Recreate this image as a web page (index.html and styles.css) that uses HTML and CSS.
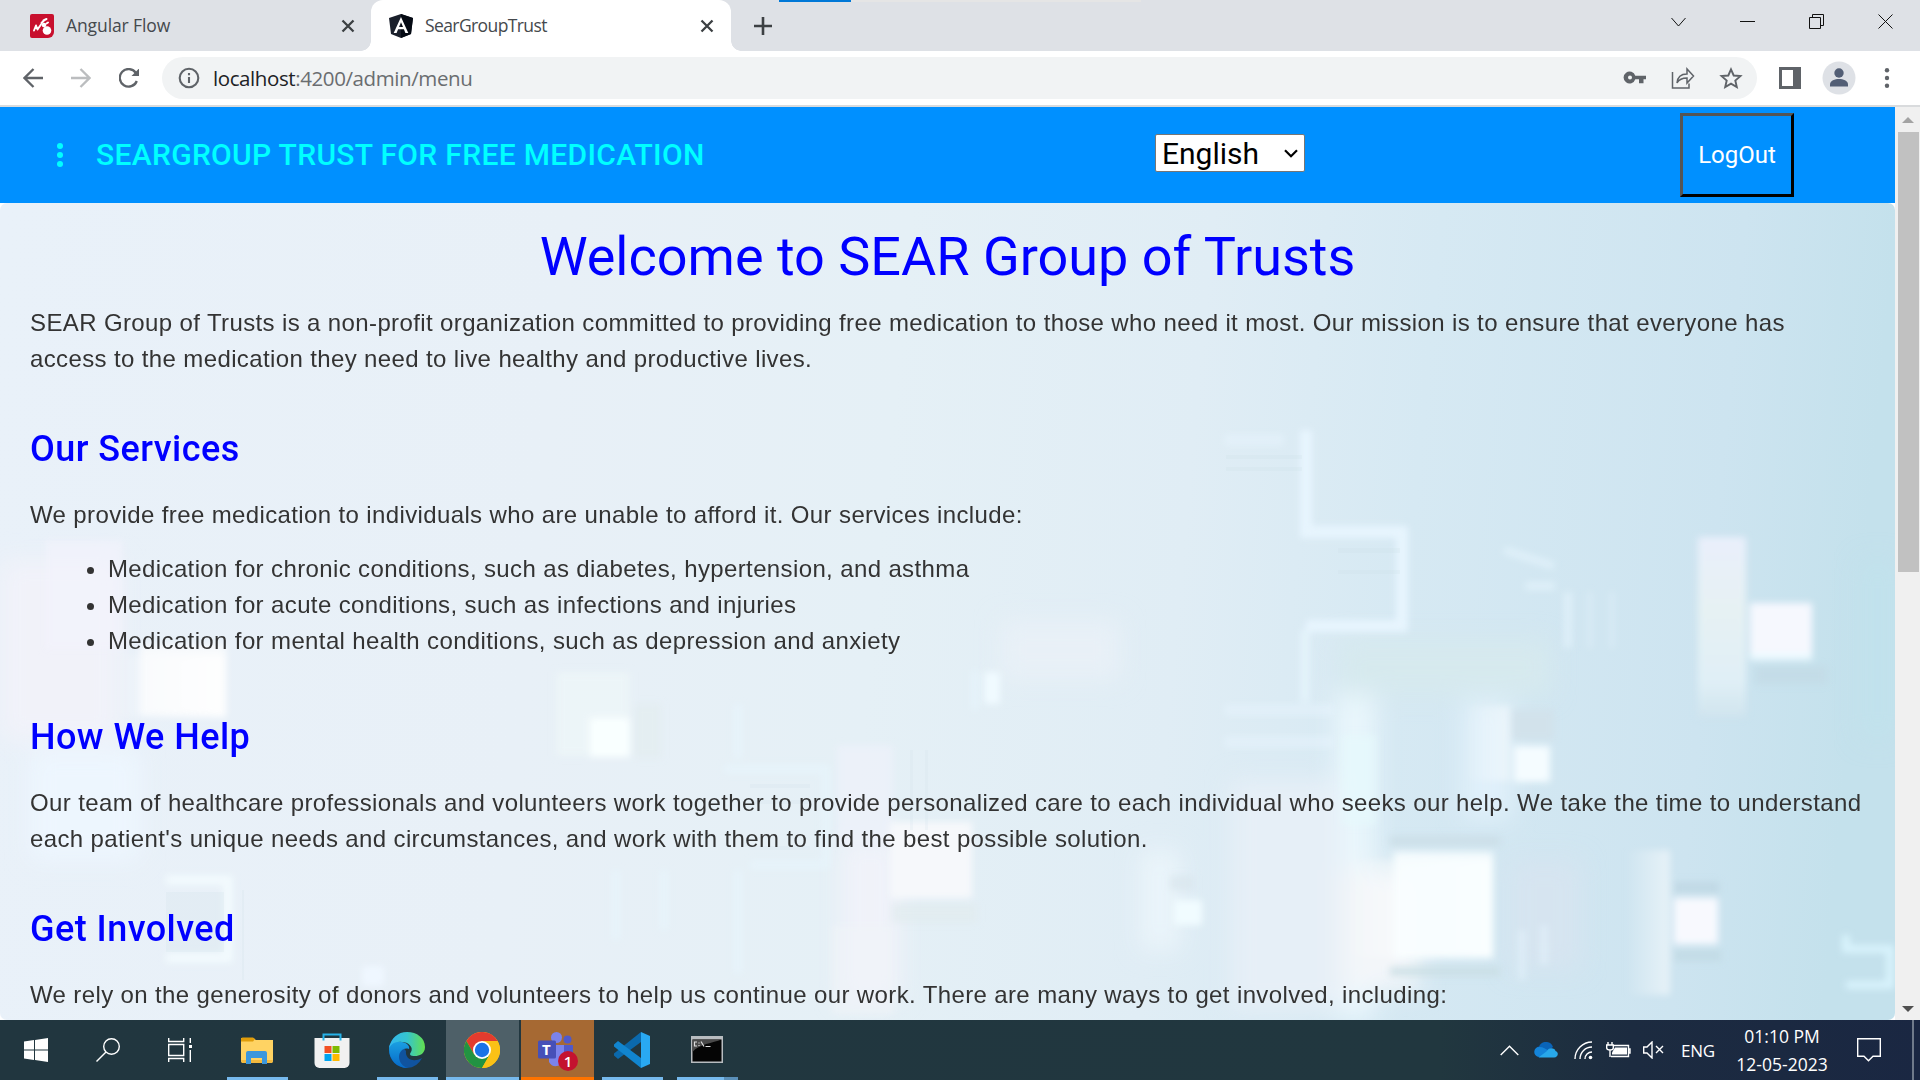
FILE: index.html
```html
<!DOCTYPE html>
<html lang="en">
<head>
<meta charset="utf-8">
<title>SearGroupTrust</title>
<link rel="stylesheet" href="styles.css">
</head>
<body>
<div class="tabstrip">
  <div class="progress"></div>
  <div class="tab">
    <svg class="favicon" viewBox="0 0 24 24"><path d="M2 0h20a2 2 0 0 1 2 2v16a6 6 0 0 1-6 6H2a2 2 0 0 1-2-2V2a2 2 0 0 1 2-2z" fill="#c8102e"/><path d="M4 16.500l2-5 1.500 4 3.500-5" fill="none" stroke="#fff" stroke-width="1.900" stroke-linecap="round" stroke-linejoin="round"/><circle cx="17" cy="16.500" r="4.300" fill="#fff"/><circle cx="14" cy="11" r="2.300" fill="#fff"/><path d="M13.500 6.500l3-1.500M11.500 9l2.500-2.500M16.500 9.500l1.500-1" stroke="#fff" stroke-width="2" stroke-linecap="round"/></svg>
    <span class="tab-title">Angular Flow</span>
    <svg class="tab-close" viewBox="0 0 14 14"><path d="M1.500 1.500l11 11M12.500 1.500l-11 11"/></svg>
  </div>
  <div class="tab active">
    <svg class="favicon" viewBox="0 0 24 24"><path d="M12 0l12 4-2 16-10 4L2 20 0 4z" fill="#1a1f2b"/><path d="M12 0l12 4-2 16-10 4z" fill="#050a14"/><path d="M12 3L4.700 19h2.900l1.500-3.800h5.800l1.500 3.800h2.900zm0 5.200l2 4.700h-4z" fill="#fff"/></svg>
    <span class="tab-title">SearGroupTrust</span>
    <svg class="tab-close" viewBox="0 0 14 14"><path d="M1.500 1.500l11 11M12.500 1.500l-11 11"/></svg>
  </div>
  <svg class="new-tab" viewBox="0 0 18 18"><path d="M9 0v18M0 9h18"/></svg>
  <div class="window-controls">
    <svg viewBox="0 0 16 16"><path d="M.5 4l7 8 7-8"/></svg>
    <svg viewBox="0 0 16 16"><path d="M0 7.500h15"/></svg>
    <svg viewBox="0 0 16 16"><path d="M.5 3.500h11v11H.5zM3.500 3.500v-3h11v11h-3"/></svg>
    <svg viewBox="0 0 16 16"><path d="M.5.5l14 14M14.500.5l-14 14"/></svg>
  </div>
</div>
<div class="toolbar">
  <div class="nav">
    <svg viewBox="0 0 20 20"><path d="M20 10H1.500M10.500 1l-9 9 9 9"/></svg>
    <svg class="disabled" viewBox="0 0 20 20"><path d="M0 10h18.500M9.500 1l9 9-9 9"/></svg>
    <svg viewBox="0 0 20 20"><path d="M17.800 13a8.800 8.800 0 1 1-1-8.200"/><path class="solid" d="M20.500 0v8h-8z"/></svg>
  </div>
  <div class="omnibox">
    <svg class="info" viewBox="0 0 22 22"><circle cx="11" cy="11" r="9.300"/><path d="M11 10v6M11 6v2.200"/></svg>
    <span class="url"><span class="host">localhost</span>:4200/admin/menu</span>
    <div class="omni-actions">
      <svg viewBox="0 0 24 24"><path class="solid" d="M12.300 9.700A6 6 0 1 0 12.300 13.300H16v4h4.500v-4h2.500V9.700zM7 13.500a2 2 0 1 1 0-4 2 2 0 0 1 0 4z"/></svg>
      <svg viewBox="0 0 24 24"><path stroke-width="1.500" d="M1.500 6v16H18v-4.500M6 17c.5-6 4-9 10-9V3l6.500 7-6.500 7v-5c-5 0-8 1.500-10 5z"/></svg>
      <svg viewBox="0 0 24 24"><path stroke-width="1.900" d="M12 3.300l2.700 6.200 6.700.6-5.100 4.400 1.500 6.600-5.800-3.500-5.800 3.500 1.500-6.600-5.100-4.400 6.700-.6z"/></svg>
    </div>
  </div>
  <svg class="side-panel" viewBox="0 0 22 22"><path d="M0 0h22v22H0zM3 3v16h11V3z" fill="#5f6368" fill-rule="evenodd"/></svg>
  <svg class="avatar" viewBox="0 0 34 34"><circle cx="17" cy="17" r="16.500" fill="#dee1e6"/><circle cx="17" cy="12" r="4.700" fill="#525e75"/><path d="M8 25.500v-2.200c0-3.500 5-5.300 9-5.300s9 1.800 9 5.300v2.200z" fill="#525e75"/></svg>
  <svg class="kebab" viewBox="0 0 6 22"><circle cx="3" cy="3.200" r="2.200"/><circle cx="3" cy="11" r="2.200"/><circle cx="3" cy="18.800" r="2.200"/></svg>
</div>
<div class="viewport">
  <div class="page">
    <header class="app-header">
      <svg class="menu-dots" viewBox="0 0 6 24"><circle cx="3" cy="3" r="3"/><circle cx="3" cy="12" r="3"/><circle cx="3" cy="21" r="3"/></svg>
      <span class="brand">SEARGROUP TRUST FOR FREE MEDICATION</span>
      <div class="language"><span>English</span><svg viewBox="0 0 14 9"><path d="M1 1.200l6 6 6-6"/></svg></div>
      <button class="logout">LogOut</button>
    </header>
    <main class="content">
      <svg class="backdrop" viewBox="0 203 1895 817" preserveAspectRatio="none">
        <defs>
          <linearGradient id="base" x1="0" y1="0" x2="1" y2=".04"><stop offset="0" stop-color="#e9f1f9"/><stop offset=".3" stop-color="#e8f0f7"/><stop offset=".48" stop-color="#e5f0f6"/><stop offset=".64" stop-color="#e0edf5"/><stop offset=".76" stop-color="#d6e9f3"/><stop offset=".92" stop-color="#cde4f0"/><stop offset="1" stop-color="#c4e1ec"/></linearGradient>
          <linearGradient id="fadeR"><stop offset="0" stop-color="#fff" stop-opacity="0"/><stop offset="1" stop-color="#fff" stop-opacity=".95"/></linearGradient>
          <linearGradient id="pillar" x1="0" y1="0" x2="0" y2="1"><stop offset="0" stop-color="#e9effb"/><stop offset=".4" stop-color="#e6f1f3"/><stop offset=".8" stop-color="#e0eff6"/><stop offset="1" stop-color="#d0e4ee"/></linearGradient>
          <filter id="s3" x="-30%" y="-30%" width="160%" height="160%"><feGaussianBlur stdDeviation="3.500"/></filter>
          <filter id="s8" x="-50%" y="-50%" width="200%" height="200%"><feGaussianBlur stdDeviation="12"/></filter>
        </defs>
        <rect y="203" width="1895" height="817" fill="url(#base)"/>
        <g filter="url(#s8)">
          <rect x="0" y="560" width="120" height="180" fill="#f1f2f9"/>
          <rect x="30" y="750" width="110" height="110" fill="#edf6fe"/>
          <rect x="1335" y="690" width="40" height="330" fill="#e9f6fc"/>
          <rect x="1230" y="780" width="110" height="230" fill="#e6eff7"/>
          <rect x="1340" y="870" width="80" height="120" fill="#f3f6f9"/>
          <rect x="1462" y="700" width="50" height="120" fill="#e0f0fa"/>
          <rect x="1860" y="560" width="35" height="180" fill="#c0e3ec" opacity=".6"/>
          <rect x="1140" y="850" width="40" height="100" fill="#eaf4fa"/>
          <rect x="1510" y="860" width="70" height="110" fill="#d6e4f0"/>
          <rect x="1000" y="620" width="120" height="60" fill="#e8f0f7"/>
          <rect x="1340" y="640" width="210" height="55" fill="#d6e9ee"/>
          <rect x="840" y="840" width="60" height="160" fill="#f0f2f9"/>
        </g>
        <g filter="url(#s3)">
          <rect x="45" y="540" width="78" height="110" fill="#f3f2fc" opacity=".65"/>
          <rect x="112" y="655" width="114" height="62" fill="url(#fadeR)"/>
          <rect x="140" y="645" width="86" height="70" fill="#fdfdfd" opacity=".7"/>
          <rect x="556" y="672" width="74" height="84" fill="#eef6f8" opacity=".7"/>
          <rect x="590" y="718" width="40" height="39" fill="#f9ffff"/>
          <rect x="634" y="704" width="27" height="54" fill="#e2ecef" opacity=".7"/>
          <rect x="984" y="672" width="16" height="32" fill="#f0faff"/>
          <rect x="837" y="745" width="56" height="100" fill="#f0f1fb" opacity=".6"/>
          <rect x="832" y="925" width="62" height="90" fill="#f0f4f9" opacity=".6"/>
          <rect x="890" y="822" width="82" height="76" fill="#f6f8fb"/>
          <rect x="892" y="904" width="85" height="18" fill="#e1ebee" opacity=".7"/>
          <rect x="1698" y="537" width="48" height="180" fill="url(#pillar)"/>
          <rect x="1750" y="630" width="62" height="30" fill="#edfaff"/>
          <rect x="1750" y="603" width="62" height="50" fill="#f6f8fe"/>
          <rect x="1755" y="666" width="72" height="18" fill="#c3dbe6" opacity=".8"/>
          <rect x="1462" y="706" width="48" height="75" fill="url(#fadeR)" opacity=".45"/>
          <rect x="1512" y="710" width="42" height="30" fill="#d2e2eb"/>
          <rect x="1514" y="746" width="36" height="36" fill="#f5fcff"/>
          <rect x="1390" y="836" width="110" height="10" fill="#cbdde6" opacity=".8"/>
          <rect x="1340" y="860" width="153" height="98" fill="url(#fadeR)"/>
          <rect x="1394" y="852" width="99" height="106" fill="#f9feff" opacity=".85"/>
          <rect x="1390" y="967" width="110" height="9" fill="#c9dde3" opacity=".8"/>
          <rect x="1626" y="850" width="44" height="145" fill="url(#fadeR)" opacity=".55"/>
          <rect x="1674" y="882" width="45" height="11" fill="#bed6e2" opacity=".8"/>
          <rect x="1674" y="898" width="44" height="46" fill="#f8f9fe"/>
          <rect x="1674" y="950" width="47" height="11" fill="#c0d9e3" opacity=".8"/>
          <rect x="1174" y="900" width="28" height="25" fill="#f1fcff"/>
          <rect x="1170" y="876" width="24" height="14" fill="#d8e6ec" opacity=".7"/>
          <rect x="1342" y="735" width="34" height="90" fill="#e6f9fc" opacity=".7"/>
          <rect x="362" y="966" width="22" height="20" fill="#eff7ff"/>
        </g>
        <g fill="none" stroke="#e8f6fe" stroke-width="8" filter="url(#s3)">
          <path d="M1306 430v102h96v94h-96" stroke-width="12" opacity=".95"/>
          <path d="M1305 630v72" stroke-width="9" opacity=".7"/>
          <path d="M1224 440h60M1224 710h110M1224 742h110" stroke-width="12" opacity=".45"/>
          <path d="M1504 550l50 16M1525 586h30M1568 592v56" opacity=".6"/>
          <path d="M1590 592v56M1612 592v56" stroke-width="5" opacity=".4"/>
          <path d="M724 769h102v96H750M738 704v54M738 870v104M616 870v70M664 870v60M975 670v40" opacity=".6"/>
          <path d="M166 880h62v78h-62" stroke="#f4fdff" stroke-width="9" opacity=".85"/>
          <path d="M1846 935v14h44v36h-44" stroke="#d8f3fc"/>
          <path d="M1544 925v40M1522 930v50" opacity=".5"/>
        </g>
        <g fill="#cadbe5" opacity=".18">
          <path d="M1226 455h76v4h-76zM1226 467h76v4h-76zM1338 548h62v5h-62zM1338 570h62v4h-62zM750 784h60v4h-60zM750 800h60v4h-60zM750 846h60v4h-60z"/>
          <path d="M166 892h58v60h-58zM242 890h2v90h-2zM910 750h3v80h-3zM925 750h3v80h-3z"/>
        </g>
      </svg>
      <h1>Welcome to SEAR Group of Trusts</h1>
      <p>SEAR Group of Trusts is a non-profit organization committed to providing free medication to those who need it most. Our mission is to ensure that everyone has access to the medication they need to live healthy and productive lives.</p>
      <h2>Our Services</h2>
      <p>We provide free medication to individuals who are unable to afford it. Our services include:</p>
      <ul>
        <li>Medication for chronic conditions, such as diabetes, hypertension, and asthma</li>
        <li>Medication for acute conditions, such as infections and injuries</li>
        <li>Medication for mental health conditions, such as depression and anxiety</li>
      </ul>
      <h2>How We Help</h2>
      <p>Our team of healthcare professionals and volunteers work together to provide personalized care to each individual who seeks our help. We take the time to understand each patient's unique needs and circumstances, and work with them to find the best possible solution.</p>
      <h2>Get Involved</h2>
      <p>We rely on the generosity of donors and volunteers to help us continue our work. There are many ways to get involved, including:</p>
    </main>
  </div>
  <div class="scrollbar">
    <svg viewBox="0 0 12 6"><path d="M0 6l6-6 6 6z" fill="#a3a3a3"/></svg>
    <div class="thumb"></div>
    <svg viewBox="0 0 12 6"><path d="M0 0l6 6 6-6z" fill="#505050"/></svg>
  </div>
</div>
<div class="taskbar">
  <div class="sys">
    <svg class="i24" viewBox="0 0 24 24"><path fill="#fff" d="M0 3.500l10-1.400v9.400H0zM11 1.900L24 0v11.500H11zM0 12.500h10v9.400L0 20.500zM11 12.500h13V24l-13-1.900z"/></svg>
    <svg class="i24 line" viewBox="0 0 24 24"><circle cx="15.500" cy="8.500" r="7.800"/><path d="M10 14L.5 23.500"/></svg>
    <svg class="i24 line" viewBox="0 0 24 24"><path d="M.7 0v3.500h15V0M.7 6.500h15v11H.7zM.7 24v-3.500h15V24M22.300 0v5M22.300 12v12"/><path d="M21 7h3v3h-3z" fill="#fff" stroke="none"/></svg>
  </div>
  <div class="apps">
    <div class="app open"><svg class="i36" viewBox="0 0 36 36"><path d="M2 6h12l3 2h17v21a2 2 0 0 1-2 2H4a2 2 0 0 1-2-2z" fill="#ffd363"/><path d="M2 7a1.500 1.500 0 0 1 1.500-1.500H14L16 7l-2 2.500H2z" fill="#e09d0a"/><path d="M7 32V21a2 2 0 0 1 2-2h17a2 2 0 0 1 2 2v11h-5v-6H12v6z" fill="#3b97dd"/><path d="M2 28h5v3H3zM12 28h11v3H12zM28 28h6l-1 3h-5z" fill="#f3b93e"/></svg></div>
    <div class="app"><svg class="i36" viewBox="0 0 36 36"><path d="M.5 6h35v25a5 5 0 0 1-5 5h-25a5 5 0 0 1-5-5z" fill="#f1f1f1"/><path d="M9.500 8.500V2.500h17v6" fill="none" stroke="#27b3ea" stroke-width="2"/><path d="M10.500 14h7v7h-7z" fill="#f25022"/><path d="M18.500 14h7v7h-7z" fill="#7fba00"/><path d="M10.500 22h7v7h-7z" fill="#00a4ef"/><path d="M18.500 22h7v7h-7z" fill="#ffb900"/></svg></div>
    <div class="app open"><svg class="i36" viewBox="0 0 36 36"><defs><linearGradient id="edgeTop"><stop offset="0" stop-color="#32b6f0"/><stop offset=".5" stop-color="#35c4cf"/><stop offset="1" stop-color="#64e04e"/></linearGradient><linearGradient id="edgeSide" x1="0" y1="0" x2="0" y2="1"><stop offset="0" stop-color="#1ba0e2"/><stop offset="1" stop-color="#0669c8"/></linearGradient></defs><path d="M33 26A18 18 0 0 1 18 36C8 36 0 28 0 18l10-8 7 9c-1 8 7 12 16 7z" fill="#10539f"/><path d="M0 17C0 8 9 9 13 10c5 1 8 4 7 7-6-2-10 3-10 8 0 5 4 10 9 11C8 36 0 28 0 17z" fill="url(#edgeSide)"/><path d="M0 16C2 6 9 0 18 0c10 0 18 6 18 15 0 7-6 9-10 9-5 0-6-1.500-4-4 3-5-3-10-9-10C7 9 3 11 0 16z" fill="url(#edgeTop)"/></svg></div>
    <div class="app open current"><svg class="i36" viewBox="0 0 36 36"><circle cx="18" cy="18" r="18" fill="#fbc116"/><path d="M2.400 9A18 18 0 0 1 33.600 9H18l-7.800 13.500z" fill="#e33b2e"/><path d="M2.400 9A18 18 0 0 0 18 36l7.800-13.500H10.200z" fill="#229342"/><path d="M18 9h15.600A18 18 0 0 1 18 36l7.800-13.500z" fill="#fbc116"/><circle cx="18" cy="18" r="9" fill="#fff"/><circle cx="18" cy="18" r="7.200" fill="#1a73e8"/></svg></div>
    <div class="app alert"><svg class="i40" viewBox="0 0 40 40"><circle cx="19.500" cy="7.500" r="5.500" fill="#7b83eb"/><circle cx="30.500" cy="9.500" r="4" fill="#5059c9"/><path d="M26 15h10v10a6 6 0 0 1-10 4z" fill="#5059c9"/><path d="M12 15h15v13a8 8 0 0 1-15 4z" fill="#7b83eb"/><rect x="1" y="10.500" width="18" height="18" rx="1.500" fill="#4650b8"/></svg><span class="teams-letter">T</span><span class="count">1</span></div>
    <div class="app open"><svg class="i36" viewBox="0 0 36 36"><path d="M27 0v10L4 27l-4-3.500v-2z" fill="#0b69ac"/><path d="M27 36V26L4 9 0 12.500v2z" fill="#1185cf"/><path d="M27 0l9 4v28l-9 4z" fill="#29a9f2"/></svg></div>
    <div class="app open grouped"><svg class="i36" viewBox="0 0 36 36"><path d="M2 4h32v27H2z" fill="#b8bcc0"/><path d="M3.500 7.500h29v22h-29z" fill="#050505"/><path d="M3.500 7.500h29C24 11 10 12 3.500 20z" fill="#4a4a4a"/><path d="M8 10H5.500v4H8M10 10.500v1M10 13v1M12 9.500l3 5M16.500 14.500h5" fill="none" stroke="#ddd" stroke-width="1.200"/></svg></div>
  </div>
  <div class="tray">
    <svg class="t-up line" viewBox="0 0 19 11"><path d="M.7 10L9.500 1.200 18.300 10"/></svg>
    <svg class="t-cloud" viewBox="0 0 24 16"><path d="M4 14a5 5 0 0 1 1-9.500A7.500 7.500 0 0 1 19 5l-8 6z" fill="#0a64b8"/><path d="M5 15A5 5 0 0 1 5.500 5C9 5 12 7 15 9l-8 6z" fill="#1484d9"/><path d="M4.500 15.500L13 9c2-4 8-3 8.500 0 3.500 1 3 6.500-1.500 6.500z" fill="#28a8ea"/></svg>
    <svg class="t-wifi line" viewBox="0 0 19 19"><path d="M1 18A17 17 0 0 1 18 1M6 18A12 12 0 0 1 18 6M11 18a7 7 0 0 1 7-7"/><circle cx="16.500" cy="16.500" r="1.800" fill="#fff" stroke="none"/></svg>
    <svg class="t-batt line" viewBox="0 0 25 18"><path d="M8 4.500h14.500v11H5M22.500 8h1.500v4h-1.500"/><path d="M9 6.500h12v7H6v-2z" fill="#fff" stroke="none"/><path d="M2 1v3M6 1v3M.7 4h6.600v3q0 2-3.300 2T.7 7zM4 9v7"/></svg>
    <svg class="t-vol line" viewBox="0 0 21 18"><path d="M.7 6H4l5-5v16l-5-5H.7zM13 5l7 7M20 5l-7 7"/></svg>
    <span class="lang">ENG</span>
    <div class="clock"><span class="time">01:10 PM</span><span class="date">12-05-2023</span></div>
    <svg class="t-note line" viewBox="0 0 24 24"><path d="M.7.7h22.600v17.600H16l-4.500 4.500L7 18.300H.7z"/></svg>
    <div class="peek"></div>
  </div>
</div>
</body>
</html>
```
FILE: styles.css
```css
* { box-sizing: border-box; }
body {
  margin: 0;
  width: 1920px;
  height: 1080px;
  overflow: hidden;
  display: flex;
  flex-direction: column;
  font-family: "Open Sans", "Noto Sans", sans-serif;
  background: #fff;
}
svg { display: block; flex: none; }

/* tab strip */
.tabstrip {
  position: relative;
  height: 51px;
  flex: none;
  display: flex;
  align-items: center;
  background: #dee1e6;
}
.progress {
  position: absolute;
  left: 779px;
  top: 0;
  width: 362px;
  height: 2px;
  background: linear-gradient(90deg, #0078d7 72px, #e5e5e5 72px);
}
.tab {
  width: 371px;
  height: 51px;
  display: flex;
  align-items: center;
  padding: 0 16px 0 30px;
}
.tab.active {
  position: relative;
  width: 360px;
  padding: 0 17px 0 18px;
  background: #fff;
  border-radius: 12px 12px 0 0;
}
.tab.active::before,
.tab.active::after {
  content: "";
  position: absolute;
  bottom: 0;
  width: 10px;
  height: 10px;
}
.tab.active::before { left: -10px; background: radial-gradient(circle at 0 0, transparent 9.5px, #fff 10px); }
.tab.active::after { right: -10px; background: radial-gradient(circle at 100% 0, transparent 9.5px, #fff 10px); }
.favicon { width: 24px; height: 24px; margin-right: 12px; }
.tab-title { flex: 1; padding-bottom: 1px; font-size: 17.5px; letter-spacing: -0.1px; color: #45494d; white-space: nowrap; }
.tab.active .tab-title { letter-spacing: -0.6px; }
.tab-close { width: 14px; height: 14px; }
.tab-close path { stroke: #3c4043; stroke-width: 2.3; }
.new-tab { width: 18px; height: 18px; margin-left: 23px; }
.new-tab path { stroke: #3c4043; stroke-width: 2.6; }
.window-controls { margin-left: auto; padding: 0 26px 8px 0; display: flex; gap: 53px; }
.window-controls svg { width: 16px; height: 16px; }
.window-controls path { fill: none; stroke: #111; stroke-width: 1; }

/* toolbar */
.toolbar {
  height: 56px;
  flex: none;
  display: flex;
  align-items: center;
  padding: 0 30px 0 23px;
  border-bottom: 2px solid #d9dbdd;
}
.nav { display: flex; gap: 28px; width: 139px; }
.nav svg { width: 20px; height: 20px; }
.nav path { fill: none; stroke: #5f6368; stroke-width: 2.3; }
.nav .disabled path { stroke: #bbbdbf; }
.omnibox {
  width: 1596px;
  height: 42px;
  display: flex;
  align-items: center;
  padding: 0 14px 0 16px;
  border-radius: 21px;
  background: #f1f3f4;
}
.info { width: 22px; height: 22px; margin-right: 13px; }
.info circle, .info path { fill: none; stroke: #5f6368; stroke-width: 2.1; }
.url { font-size: 20.5px; letter-spacing: -0.4px; color: #6a6d70; white-space: nowrap; }
.host { color: #202124; }
.omni-actions { margin-left: auto; display: flex; gap: 24px; }
.omni-actions svg { width: 24px; height: 24px; }
.omni-actions path { fill: none; stroke: #5f6368; }
.toolbar .solid { fill: #5f6368; stroke: none; }
.side-panel { width: 22px; height: 22px; margin-left: 22px; }
.avatar { width: 34px; height: 34px; margin-left: 21px; }
.kebab { width: 6px; height: 22px; margin-left: 28px; fill: #5f6368; }

/* web page */
.viewport { height: 913px; flex: none; display: flex; }
.page { width: 1895px; overflow: hidden; background: #fff; }
.app-header {
  height: 96px;
  display: flex;
  align-items: center;
  padding: 0 101px 0 57px;
  background: #0090ff;
  font-family: Roboto, sans-serif;
}
.menu-dots { width: 6px; height: 24px; fill: #0ff; }
.brand { margin-left: 33px; padding-bottom: 2px; width: 1059px; color: #0ff; font-size: 30px; font-weight: 500; letter-spacing: 0.32px; white-space: nowrap; }
.language {
  width: 150px;
  height: 38px;
  margin-top: -4px;
  padding: 0 6px 0 6px;
  display: flex;
  align-items: center;
  justify-content: space-between;
  background: #fff;
  border: 1px solid #767676;
  border-radius: 2px;
  color: #000;
  font-size: 30px;
  line-height: 36px;
}
.language span { padding-top: 2px; }
.language svg { width: 14px; height: 9px; }
.language path { fill: none; stroke: #000; stroke-width: 2.2; }
.logout {
  width: 114px;
  height: 84px;
  margin-left: auto;
  padding: 0;
  background: transparent;
  border: 3px solid;
  border-color: #555 #000 #000 #555;
  color: #fff;
  font: 400 24px Roboto, sans-serif;
}
.content {
  position: relative;
  z-index: 0;
  height: 817px;
  padding: 18px 30px 0;
  border-radius: 7px;
  overflow: hidden;
  color: #333;
}
.backdrop { position: absolute; inset: 0; width: 1895px; height: 817px; z-index: -1; }
h1, h2 { color: #00f; font-family: Roboto, sans-serif; }
h1 { margin: 0 0 12px; font-size: 54px; line-height: 72px; font-weight: 400; text-align: center; }
h2 { margin: 48px 0 24px; font-size: 36px; line-height: 48px; font-weight: 500; letter-spacing: 0.45px; }
p, ul { margin: 0; font: 24px/36px "Liberation Sans", Arial, sans-serif; letter-spacing: 0.375px; }
ul { margin: 18px 0 54px; padding-left: 78px; }
.scrollbar {
  width: 25px;
  display: flex;
  flex-direction: column;
  align-items: center;
  padding: 10px 1px 8px 2px;
  background: #f0f0f0;
}
.scrollbar svg { width: 12px; height: 6px; }
.thumb { width: 21px; height: 440px; margin: 9px 0 auto; background: #c1c1c1; }

/* taskbar */
.taskbar {
  height: 60px;
  flex: none;
  display: flex;
  background: linear-gradient(90deg, #21363f 0, #21373f 75%, #1c2b40 85%, #1a2742 100%);
  color: #fff;
}
.line { fill: none; stroke: #fff; stroke-width: 1.4; }
.sys { width: 221px; display: flex; align-items: center; gap: 48px; padding-left: 24px; }
.i24 { width: 24px; height: 24px; }
.i36 { width: 36px; height: 36px; }
.i40 { width: 40px; height: 40px; }
.apps { display: flex; gap: 2px; }
.app { position: relative; width: 73px; height: 60px; display: flex; align-items: center; justify-content: center; }
.app svg { margin-left: -2px; }
.app::after { content: ""; position: absolute; left: 6px; right: 6px; bottom: 0; height: 3px; }
.open::after { background: #76b9ed; }
.current { background: #4e6068; }
.app.current::after, .app.alert::after { left: 0; right: 0; }
.alert { background: #a66933; }
.alert::after { background: #ff7300; }
.grouped::after { background: linear-gradient(90deg, #76b9ed 47px, #5a8fb8 47px); }
.teams-letter { position: absolute; left: 21px; top: 20px; font: 700 15px/19px "Open Sans", sans-serif; }
.count {
  position: absolute;
  left: 37px;
  top: 31px;
  width: 20px;
  height: 20px;
  border-radius: 50%;
  background: #c4122f;
  font-size: 15px;
  font-weight: 600;
  line-height: 20px;
  text-align: center;
}
.tray { margin-left: auto; display: flex; align-items: center; font-size: 17px; }
.t-up { width: 19px; height: 11px; }
.t-cloud { width: 24px; height: 16px; margin-left: 15px; }
.t-wifi { width: 19px; height: 19px; margin-left: 16px; }
.t-batt { width: 25px; height: 18px; margin-left: 13px; }
.t-vol { width: 21px; height: 18px; margin-left: 12px; }
.lang { width: 36px; margin-left: 17px; white-space: nowrap; letter-spacing: -0.3px; }
.clock { width: 94px; margin-left: 18px; display: flex; flex-direction: column; align-items: center; font-size: 17.5px; line-height: 28px; white-space: nowrap; }
.t-note { width: 24px; height: 24px; margin-left: 28px; }
.peek { width: 8px; height: 60px; margin-left: 31px; border-left: 2px solid #6f7a8a; }
```
